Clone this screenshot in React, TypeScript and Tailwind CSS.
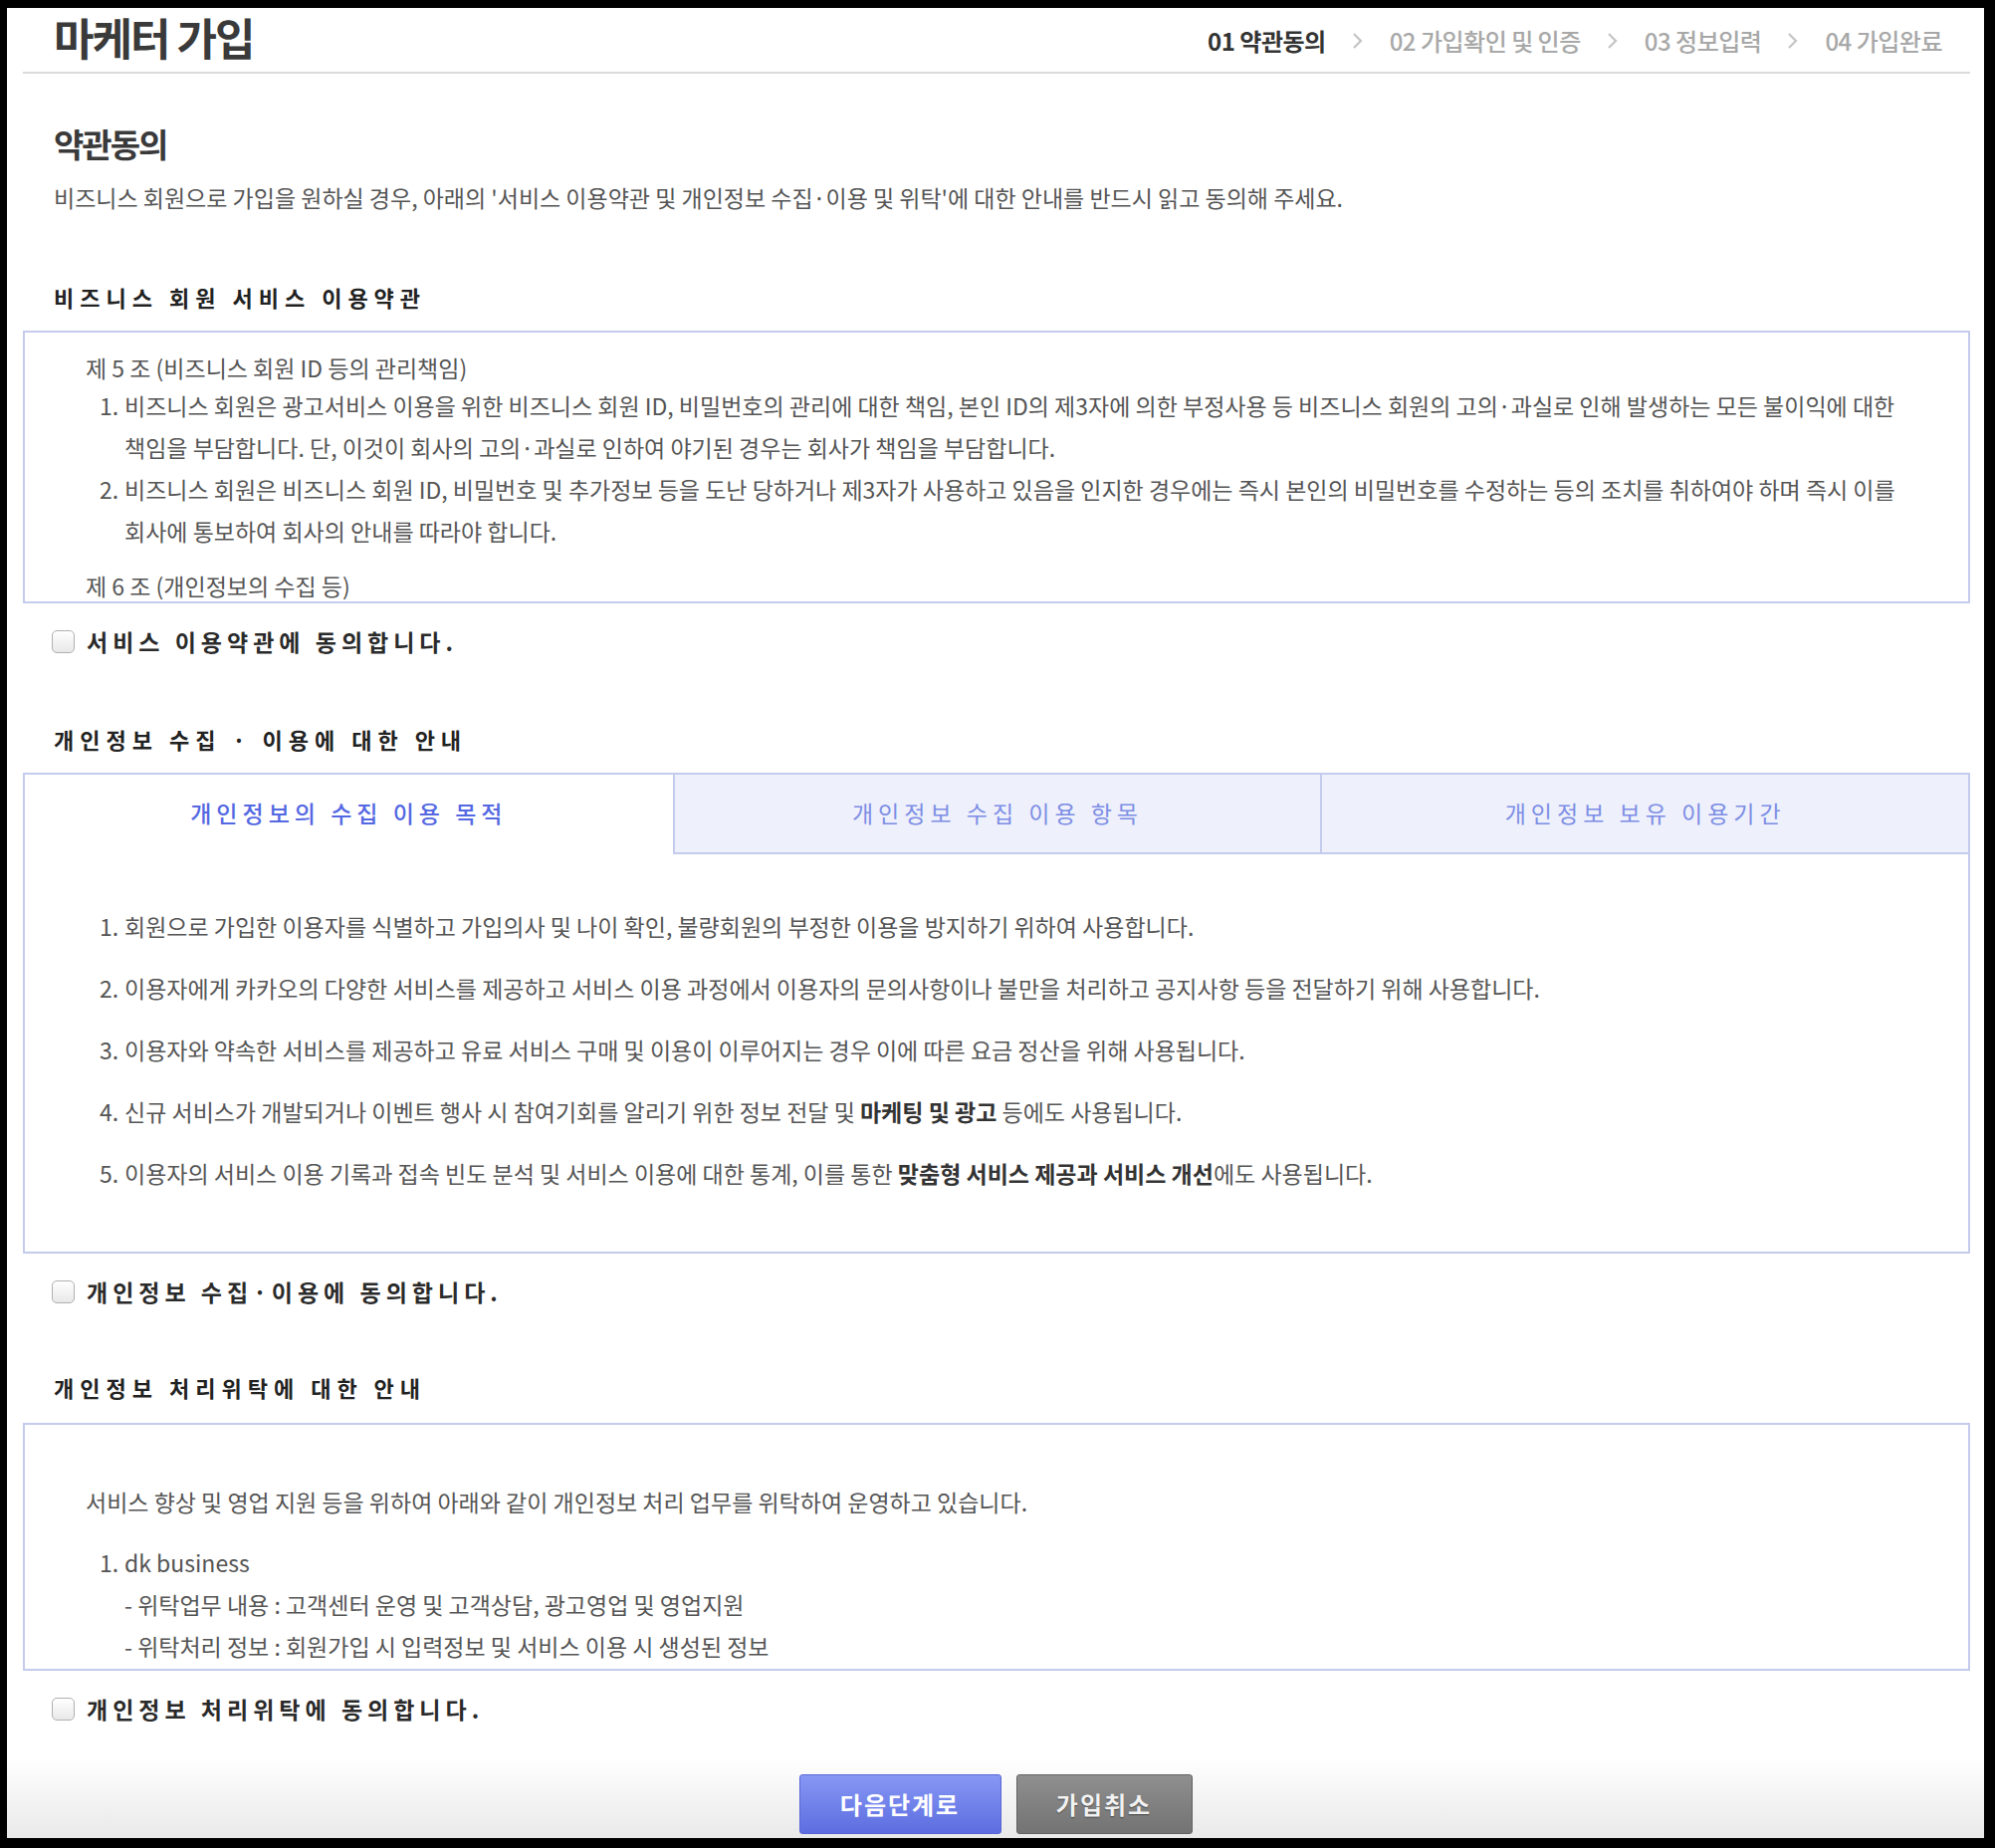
import React from 'react';

const steps = [
  { no: '01', label: '약관동의', active: true },
  { no: '02', label: '가입확인 및 인증', active: false },
  { no: '03', label: '정보입력', active: false },
  { no: '04', label: '가입완료', active: false },
];

const tabs = ['개인정보의 수집 이용 목적', '개인정보 수집 이용 항목', '개인정보 보유 이용기간'];

const Chevron = () => (
  <svg width="12" height="18" viewBox="0 0 12 18" className="mx-[26px]">
    <polyline points="2,2 9,9 2,16" fill="none" stroke="#c4c4c4" strokeWidth="2.2" />
  </svg>
);

const Heading = ({ children, mt }: { children: React.ReactNode; mt: string }) => (
  <h3 className={`${mt} pl-[31px] h-[30px] leading-[30px] text-[22px] font-bold tracking-[6px] text-[#222]`}>
    {children}
  </h3>
);

const Agree = ({ label }: { label: string }) => (
  <label className="mt-[23px] flex h-[30px] items-center pl-[29px]">
    <span className="h-[23px] w-[23px] rounded-[5px] border border-[#b0b0b0] bg-linear-to-b from-white to-[#e8e8e8]" />
    <span className="ml-[12px] text-[23px] font-bold tracking-[5px] text-[#2a2a2a]">{label}</span>
  </label>
);

const Num = ({ n }: { n: number }) => <span className="w-[25px] shrink-0">{n}.</span>;

export default function App() {
  return (
    <div className="bg-black pl-[7px] pt-[8px] pr-[11px] pb-[10px] font-['Noto_Sans_CJK_KR',sans-serif]">
      <div className="flex h-[1838px] flex-col overflow-hidden bg-white pl-[16px] pr-[14px]">
        {/* header */}
        <div className="flex h-[66px] shrink-0 justify-between border-b-2 border-[#dadada] pl-[31px] pr-[28px]">
          <h1 className="mt-[3px] text-[44px] leading-[52px] font-bold tracking-[-2px] text-[#3a3a3a]">마케터 가입</h1>
          <div className="mt-[18px] flex h-[30px] items-center text-[24px] font-bold tracking-[-0.5px]">
            {steps.map((s, i) => (
              <React.Fragment key={s.no}>
                {i > 0 && <Chevron />}
                <span className={s.active ? 'text-[#333]' : 'font-medium text-[#a8a8a8]'}>
                  {s.no} {s.label}
                </span>
              </React.Fragment>
            ))}
          </div>
        </div>

        <h2 className="mt-[50px] pl-[31px] h-[40px] leading-[40px] text-[33px] font-bold tracking-[-2px] text-[#3a3a3a]">약관동의</h2>
        <p className="mt-[19px] pl-[31px] h-[30px] leading-[30px] text-[23px] text-[#555]">
          비즈니스 회원으로 가입을 원하실 경우, 아래의 '서비스 이용약관 및 개인정보 수집·이용 및 위탁'에 대한 안내를 반드시 읽고 동의해 주세요.
        </p>

        {/* terms */}
        <Heading mt="mt-[70px]">비즈니스 회원 서비스 이용약관</Heading>
        <div className="mt-[19px] h-[274px] shrink-0 overflow-hidden border-2 border-[#c4cbec] pt-[18px] pl-[61px] text-[23px] text-[#555]">
          <p className="h-[34px] leading-[34px]">제 5 조 (비즈니스 회원 ID 등의 관리책임)</p>
          <ol className="pl-[14px] leading-[42px]">
            <li className="flex whitespace-nowrap">
              <Num n={1} />
              <span>
                비즈니스 회원은 광고서비스 이용을 위한 비즈니스 회원 ID, 비밀번호의 관리에 대한 책임, 본인 ID의 제3자에 의한 부정사용 등 비즈니스 회원의 고의·과실로 인해 발생하는 모든 불이익에 대한
                <br />
                책임을 부담합니다. 단, 이것이 회사의 고의·과실로 인하여 야기된 경우는 회사가 책임을 부담합니다.
              </span>
            </li>
            <li className="flex whitespace-nowrap">
              <Num n={2} />
              <span>
                비즈니스 회원은 비즈니스 회원 ID, 비밀번호 및 추가정보 등을 도난 당하거나 제3자가 사용하고 있음을 인지한 경우에는 즉시 본인의 비밀번호를 수정하는 등의 조치를 취하여야 하며 즉시 이를
                <br />
                회사에 통보하여 회사의 안내를 따라야 합니다.
              </span>
            </li>
          </ol>
          <p className="mt-[17px] h-[34px] leading-[34px]">제 6 조 (개인정보의 수집 등)</p>
        </div>
        <Agree label="서비스 이용약관에 동의합니다." />

        {/* privacy tabs */}
        <Heading mt="mt-[68px]">개인정보 수집 · 이용에 대한 안내</Heading>
        <div className="mt-[19px] shrink-0 border-2 border-[#c4cbec]">
          <div className="grid h-[80px] grid-cols-3">
            {tabs.map((t, i) => (
              <div
                key={t}
                className={
                  i === 0
                    ? 'flex items-center justify-center pb-[4px] text-[23px] font-medium tracking-[5px] text-[#5468e2]'
                    : 'flex items-center justify-center border-b-2 border-l-2 border-[#c4cbec] bg-[#eef0fc] pb-[2px] text-[23px] tracking-[5px] text-[#7d8ee4]'
                }
              >
                {t}
              </div>
            ))}
          </div>
          <ol className="pt-[41px] pb-[48px] pl-[75px] text-[23px] text-[#555]">
            <li className="flex h-[62px] items-center">
              <Num n={1} />
              회원으로 가입한 이용자를 식별하고 가입의사 및 나이 확인, 불량회원의 부정한 이용을 방지하기 위하여 사용합니다.
            </li>
            <li className="flex h-[62px] items-center">
              <Num n={2} />
              이용자에게 카카오의 다양한 서비스를 제공하고 서비스 이용 과정에서 이용자의 문의사항이나 불만을 처리하고 공지사항 등을 전달하기 위해 사용합니다.
            </li>
            <li className="flex h-[62px] items-center">
              <Num n={3} />
              이용자와 약속한 서비스를 제공하고 유료 서비스 구매 및 이용이 이루어지는 경우 이에 따른 요금 정산을 위해 사용됩니다.
            </li>
            <li className="flex h-[62px] items-center">
              <Num n={4} />
              <span>
                신규 서비스가 개발되거나 이벤트 행사 시 참여기회를 알리기 위한 정보 전달 및{' '}
                <b className="font-bold text-[#333]">마케팅 및 광고</b> 등에도 사용됩니다.
              </span>
            </li>
            <li className="flex h-[62px] items-center">
              <Num n={5} />
              <span>
                이용자의 서비스 이용 기록과 접속 빈도 분석 및 서비스 이용에 대한 통계, 이를 통한{' '}
                <b className="font-bold text-[#333]">맞춤형 서비스 제공과 서비스 개선</b>에도 사용됩니다.
              </span>
            </li>
          </ol>
        </div>
        <Agree label="개인정보 수집·이용에 동의합니다." />

        {/* consignment */}
        <Heading mt="mt-[66px]">개인정보 처리위탁에 대한 안내</Heading>
        <div className="mt-[21px] h-[249px] shrink-0 overflow-hidden border-2 border-[#c4cbec] pt-[56px] pl-[61px] text-[23px] leading-[42px] text-[#555]">
          <p>서비스 향상 및 영업 지원 등을 위하여 아래와 같이 개인정보 처리 업무를 위탁하여 운영하고 있습니다.</p>
          <div className="mt-[19px] pl-[14px]">
            <p className="flex">
              <Num n={1} />
              dk business
            </p>
            <p className="pl-[25px]">- 위탁업무 내용 : 고객센터 운영 및 고객상담, 광고영업 및 영업지원</p>
            <p className="pl-[25px]">- 위탁처리 정보 : 회원가입 시 입력정보 및 서비스 이용 시 생성된 정보</p>
          </div>
        </div>
        <Agree label="개인정보 처리위탁에 동의합니다." />

        {/* buttons */}
        <div className="-mx-[16px] -mr-[14px] flex flex-1 justify-center gap-[15px] bg-linear-to-b from-white from-30% to-[#e9e9e9] pt-[51px]">
          <button className="h-[60px] w-[203px] rounded-[3px] border border-[#5866d6] bg-linear-to-b from-[#8797f4] to-[#5d6de0] text-[24px] font-bold tracking-[2px] text-white">
            다음단계로
          </button>
          <button className="h-[60px] w-[177px] rounded-[3px] border border-[#626262] bg-linear-to-b from-[#8f8f8f] to-[#737373] text-[24px] font-bold tracking-[2px] text-[#f2f2f2] [text-shadow:0_1px_1px_#444]">
            가입취소
          </button>
        </div>
      </div>
    </div>
  );
}
